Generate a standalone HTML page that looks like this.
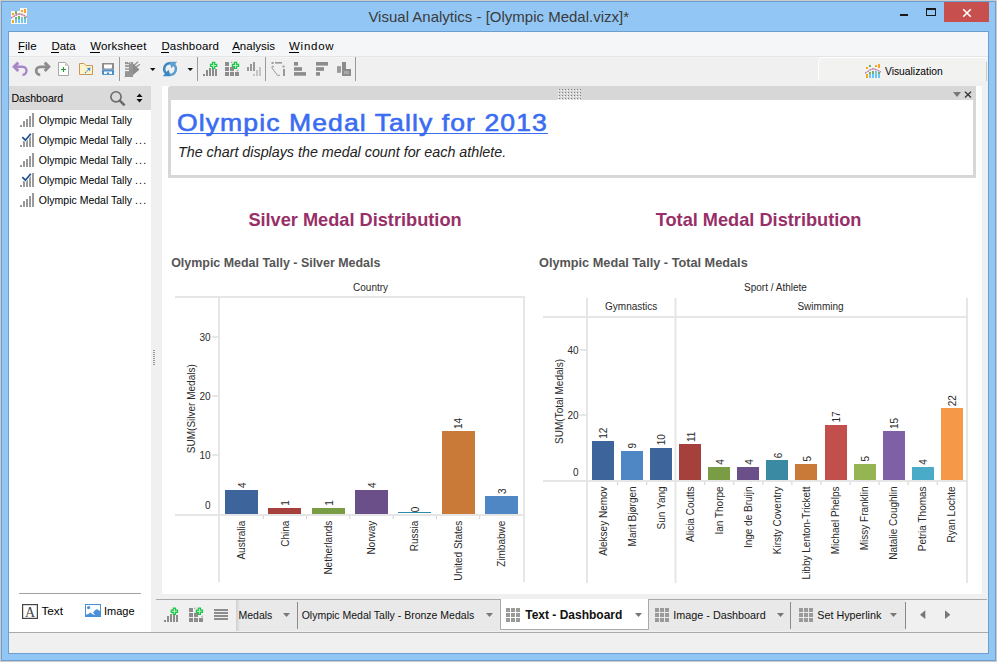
<!DOCTYPE html>
<html><head><meta charset="utf-8"><style>
*{margin:0;padding:0;box-sizing:border-box}
html,body{width:997px;height:662px;overflow:hidden}
body{position:relative;background:#cbcbcb;font-family:"Liberation Sans", sans-serif}
.a{position:absolute}
.t{position:absolute;white-space:nowrap;line-height:1}
svg text{font-family:"Liberation Sans", sans-serif}
</style></head><body>
<div class="a" style="left:1px;top:1px;width:995px;height:660px;background:#92c7f5;border:1px solid #6c9fd0"></div>
<div class="a" style="left:8px;top:31px;width:981px;height:623px;background:#f0f0f0;border:1px solid #6c9fd0"></div>
<svg class="a" style="left:11px;top:8px" width="16" height="16" viewBox="0 0 16 16">
<rect x="0" y="3" width="16" height="13" fill="#fdf6ee"/><rect x="9" y="0" width="7" height="5" fill="#fdf6ee"/>
<rect x="1" y="5" width="2" height="2" fill="#f5a623"/><rect x="4" y="3" width="2" height="3" fill="#6fb06f"/>
<rect x="10" y="2" width="2" height="2" fill="#f5a623"/><rect x="13" y="1" width="2" height="4" fill="#f5a623"/>
<rect x="1" y="12" width="2" height="3" fill="#f5a623"/><rect x="4" y="11" width="2" height="4" fill="#6ec6f5"/><rect x="4" y="9" width="2" height="2" fill="#6fb06f"/>
<rect x="7" y="11" width="2" height="4" fill="#6ec6f5"/><rect x="7" y="8" width="2" height="3" fill="#6fb06f"/>
<rect x="10" y="9" width="2" height="6" fill="#6ec6f5"/><rect x="13" y="11" width="2" height="4" fill="#6ec6f5"/><rect x="13" y="9" width="2" height="2" fill="#6fb06f"/>
<path d="M0 10L5 7L8 5.8L11 6.5L16 9" fill="none" stroke="#f4a8a0" stroke-width="1.4"/>
<path d="M0 10L5 7L8 5.8L11 6.5L16 9" fill="none" stroke="#9a86d8" stroke-width="1.4" stroke-dasharray="1.4 1.4"/>
</svg>
<div class="t" style="left:368.40px;top:8.60px;font-size:15px;color:#3b3b3b;font-weight:normal;font-style:normal;">Visual Analytics - [Olympic Medal.vizx]*</div>
<div class="a" style="left:900px;top:14px;width:8px;height:2px;background:#1a1a1a"></div>
<div class="a" style="left:926px;top:8px;width:10px;height:8px;border:1px solid #1a1a1a;border-top-width:2px"></div>
<div class="a" style="left:944px;top:2px;width:45px;height:20px;background:#c7504f"></div>
<svg class="a" style="left:962px;top:8px" width="10" height="10" viewBox="0 0 10 10"><path d="M1.2 1.2L8.8 8.8M8.8 1.2L1.2 8.8" stroke="#fff" stroke-width="1.6"/></svg>
<div class="a" style="left:9px;top:32px;width:979px;height:24px;background:#f5f6f7"></div>
<div class="a" style="left:9px;top:56px;width:979px;height:1px;background:#e4e5e7"></div>
<div class="a" style="left:9px;top:57px;width:979px;height:1px;background:#f4f4f4"></div>
<div class="t" style="left:18.00px;top:41.07px;font-size:11.5px;color:#000;font-weight:normal;font-style:normal;letter-spacing:0px">File</div>
<div class="a" style="left:18px;top:52px;width:6px;height:1px;background:#000"></div>
<div class="t" style="left:51.40px;top:41.07px;font-size:11.5px;color:#000;font-weight:normal;font-style:normal;letter-spacing:0px">Data</div>
<div class="a" style="left:51.4px;top:52px;width:8px;height:1px;background:#000"></div>
<div class="t" style="left:90.20px;top:41.07px;font-size:11.5px;color:#000;font-weight:normal;font-style:normal;letter-spacing:0.18px">Worksheet</div>
<div class="a" style="left:90.2px;top:52px;width:10px;height:1px;background:#000"></div>
<div class="t" style="left:161.40px;top:41.07px;font-size:11.5px;color:#000;font-weight:normal;font-style:normal;letter-spacing:0.15px">Dashboard</div>
<div class="a" style="left:161.4px;top:52px;width:8px;height:1px;background:#000"></div>
<div class="t" style="left:232.20px;top:41.07px;font-size:11.5px;color:#000;font-weight:normal;font-style:normal;letter-spacing:0px">Analysis</div>
<div class="a" style="left:232.2px;top:52px;width:8px;height:1px;background:#000"></div>
<div class="t" style="left:289.00px;top:41.07px;font-size:11.5px;color:#000;font-weight:normal;font-style:normal;letter-spacing:0.75px">Window</div>
<div class="a" style="left:289px;top:52px;width:10px;height:1px;background:#000"></div>
<svg class="a" style="left:9px;top:57px" width="360" height="29" viewBox="9 57 360 29"><path d="M18.3 62.6L14.2 66.8L18.3 71" fill="none" stroke="#a986c9" stroke-width="3"/><path d="M15 66.8H22.5A4 4 0 0 1 22.5 74.8" fill="none" stroke="#a986c9" stroke-width="2.4"/><path d="M44.7 62.6L48.8 66.8L44.7 71" fill="none" stroke="#8c8c8c" stroke-width="3"/><path d="M48 66.8H40.2A4 4 0 0 0 40.2 74.8" fill="none" stroke="#8c8c8c" stroke-width="2.8"/><path d="M58.5 62.5H65.2L68.5 65.8V75.5H58.5Z" fill="#fff" stroke="#a8a8a8"/><path d="M65 62.8V66H68.2Z" fill="#c8c8c8"/><path d="M61 69.5H66M63.5 67V72" stroke="#2a9a3a" stroke-width="1.2"/><path d="M79.5 74.5V63.5H84L86 65.5H92.5V74.5Z" fill="#fdf4cc" stroke="#c8955a"/><path d="M85 73L89 69" fill="none" stroke="#3a8fd0" stroke-width="1.1" stroke-dasharray="1.5 0.8"/><path d="M90.5 67.5L86.8 68.2L89.8 71.2Z" fill="#3a8fd0"/><rect x="102" y="63" width="12" height="6.5" fill="#8c8c8c"/><path d="M104 64.5H112V67.5Q112 68.5 111 68.5H105Q104 68.5 104 67.5Z" fill="#fff"/><path d="M102 69.5H114V75H103L102 74Z" fill="#4a8fc8"/><rect x="104" y="71.5" width="8" height="2.6" fill="#fff"/><rect x="106.8" y="72.4" width="2.4" height="1.7" fill="#4a8fc8"/><rect x="119" y="57" width="1" height="24" fill="#9a9a9a"/><rect x="125" y="62" width="8" height="15" fill="#969696"/><path d="M133 63.5L139.5 69.5L133 75Z" fill="#8a8a8a"/><path d="M124.5 77L133 69" stroke="#8f8f8f" stroke-width="1"/><path d="M134.2 65.2L138 61.8M135.6 67.4L140 64.2" stroke="#969696" stroke-width="1.4"/><rect x="125" y="64.2" width="4" height="1" fill="#f0f0f0"/><rect x="125" y="67" width="4" height="1.3" fill="#f0f0f0"/><rect x="125" y="69.8" width="4" height="1.3" fill="#f0f0f0"/><rect x="128" y="62" width="1" height="1" fill="#f0f0f0"/><rect x="130" y="62.5" width="1" height="1" fill="#f0f0f0"/><path d="M150 68H155.5L152.75 71Z" fill="#111"/><path d="M170 63.2A5.8 5.8 0 0 0 166.6 73.7" fill="none" stroke="#3d86c3" stroke-width="2.5"/><path d="M162.8 76.2H170.8L168.5 69.8Z" fill="#3d86c3"/><path d="M170 74.8A5.8 5.8 0 0 0 173.4 64.3" fill="none" stroke="#5a9fd0" stroke-width="2.5"/><path d="M177.2 61.8H169.2L171.5 68.2Z" fill="#5a9fd0"/><path d="M187.5 68H193L190.25 71Z" fill="#111"/><rect x="197" y="57" width="1" height="24" fill="#9a9a9a"/><rect x="203" y="74" width="2" height="2" fill="#8c8c8c"/><rect x="206" y="70" width="2" height="6" fill="#8c8c8c"/><rect x="209" y="68" width="2" height="8" fill="#8c8c8c"/><rect x="212" y="69" width="2" height="7" fill="#8c8c8c"/><rect x="215" y="69" width="2" height="7" fill="#8c8c8c"/><path d="M212.5 62.300000000000004H214.7V64.30000000000001H216.7V66.5H214.7V68.5H212.5V66.5H210.5V64.30000000000001H212.5Z" fill="#b8f0c4" stroke="#1cc448" stroke-width="1.2"/><rect x="225" y="62" width="4" height="4" fill="#8c8c8c"/><rect x="225" y="67" width="4" height="4" fill="#8c8c8c"/><rect x="225" y="72" width="4" height="4" fill="#8c8c8c"/><rect x="230" y="67" width="4" height="4" fill="#8c8c8c"/><rect x="230" y="72" width="4" height="4" fill="#8c8c8c"/><rect x="235" y="72" width="4" height="4" fill="#8c8c8c"/><path d="M231.5 63V62H232.5M238 69.5V71H236.5M231.5 69.5V71H232.5" fill="none" stroke="#999" stroke-width="0.8"/><path d="M234.4 62.300000000000004H236.6V64.30000000000001H238.6V66.5H236.6V68.5H234.4V66.5H232.4V64.30000000000001H234.4Z" fill="#b8f0c4" stroke="#1cc448" stroke-width="1.2"/><rect x="247" y="67" width="2" height="4" fill="#999"/><rect x="250" y="64" width="2" height="7" fill="#999"/><rect x="253" y="62" width="2" height="9" fill="#999"/><rect x="253" y="74" width="2" height="2" fill="#c4c4c4"/><rect x="256" y="70" width="2" height="6" fill="#c4c4c4"/><rect x="259" y="67" width="2" height="9" fill="#c4c4c4"/><rect x="265" y="57" width="1" height="24" fill="#9a9a9a"/><rect x="275" y="62" width="7" height="1.6" fill="#999"/><rect x="271.5" y="62" width="2" height="2" fill="#999"/><rect x="282.5" y="65.5" width="2" height="2" fill="#999"/><rect x="283" y="69" width="2" height="7" fill="#999"/><path d="M272 66.5V68L277.5 75.3H280" fill="none" stroke="#999" stroke-width="1"/><path d="M272 66L274 67" stroke="#999" stroke-width="1"/><rect x="294" y="62" width="4" height="3.6" fill="#8c8c8c"/><rect x="294" y="67.2" width="8" height="3.6" fill="#8c8c8c"/><rect x="294" y="72.1" width="12" height="3.6" fill="#8c8c8c"/><rect x="316" y="62" width="12" height="3.6" fill="#8c8c8c"/><rect x="316" y="67.2" width="8" height="3.6" fill="#8c8c8c"/><rect x="316" y="72.1" width="4" height="3.6" fill="#8c8c8c"/><rect x="337" y="66.2" width="4" height="6.6" fill="#9a9a9a"/><rect x="342" y="62" width="4" height="14" fill="#8c8c8c"/><rect x="342" y="69" width="9" height="7" fill="#8c8c8c"/><rect x="344" y="71" width="5" height="3" fill="#a8a8a8"/><rect x="355" y="57" width="1" height="24" fill="#9a9a9a"/></svg>
<div class="a" style="left:818px;top:57px;width:169px;height:24px;background:#f2f2f1;border-top:1px solid #fff;border-left:1px solid #fff;border-top-left-radius:5px"></div>
<div class="a" style="left:986px;top:62px;width:1px;height:19px;background:#c8c8c8"></div>
<svg class="a" style="left:865px;top:64px" width="16" height="14" viewBox="0 0 16 14">
<rect x="1" y="3" width="2" height="2" fill="#f5a623"/><rect x="4" y="1" width="2" height="2" fill="#6fb06f"/>
<rect x="10" y="1" width="2" height="2" fill="#f5a623"/><rect x="13" y="0" width="2" height="4" fill="#f5a623"/>
<rect x="1" y="10" width="2" height="4" fill="#f5a623"/><rect x="4" y="10" width="2" height="4" fill="#6ec6f5"/><rect x="4" y="8" width="2" height="2" fill="#6fb06f"/>
<rect x="7" y="10" width="2" height="4" fill="#6ec6f5"/><rect x="7" y="7" width="2" height="3" fill="#6fb06f"/>
<rect x="10" y="7" width="2" height="7" fill="#6ec6f5"/><rect x="13" y="10" width="2" height="4" fill="#6ec6f5"/><rect x="13" y="8" width="2" height="2" fill="#6fb06f"/>
<path d="M0 9.2L5 6L8 4.8L11 5.5L16 8" fill="none" stroke="#f4a8a0" stroke-width="1.3"/>
<path d="M0 9.2L5 6L8 4.8L11 5.5L16 8" fill="none" stroke="#9a86d8" stroke-width="1.3" stroke-dasharray="1.4 1.4"/>
</svg>
<div class="t" style="left:885.00px;top:66.78px;font-size:10.3px;color:#000;font-weight:normal;font-style:normal;">Visualization</div>
<div class="a" style="left:9px;top:86px;width:142px;height:24px;background:#dadada"></div>
<div class="t" style="left:11.40px;top:92.53px;font-size:10.6px;color:#000;font-weight:normal;font-style:normal;">Dashboard</div>
<svg class="a" style="left:109px;top:90px" width="18" height="18" viewBox="0 0 18 18">
<circle cx="7" cy="6.8" r="5.1" fill="none" stroke="#6a6a6a" stroke-width="1.6"/><path d="M10.6 10.4L15.6 15.4" stroke="#6a6a6a" stroke-width="2.6"/></svg>
<svg class="a" style="left:136px;top:93px" width="7" height="10" viewBox="0 0 7 10">
<path d="M3.5 0.5L6.5 4H0.5Z M3.5 9.5L6.5 6H0.5Z" fill="#111"/></svg>
<div class="a" style="left:9px;top:110px;width:142px;height:522px;background:#fff"></div>
<svg class="a" style="left:20px;top:113px" width="15" height="14" viewBox="0 0 15 14"><rect x="0" y="12" width="2" height="2" fill="#9a9a9a"/><rect x="3" y="8" width="2" height="6" fill="#9a9a9a"/><rect x="6" y="6" width="2" height="8" fill="#9a9a9a"/><rect x="9" y="3" width="2" height="11" fill="#9a9a9a"/><rect x="12" y="0" width="2" height="14" fill="#9a9a9a"/></svg>
<div class="t" style="left:38.80px;top:114.71px;font-size:10.5px;color:#000;font-weight:normal;font-style:normal;">Olympic Medal Tally</div>
<svg class="a" style="left:20px;top:133px" width="15" height="14" viewBox="0 0 15 14"><rect x="0" y="12" width="2" height="2" fill="#9a9a9a"/><rect x="3" y="8" width="2" height="6" fill="#9a9a9a"/><rect x="6" y="6" width="2" height="8" fill="#9a9a9a"/><rect x="9" y="3" width="2" height="11" fill="#9a9a9a"/><rect x="12" y="0" width="2" height="14" fill="#9a9a9a"/><path d="M2.3 4.2L5.4 7.2L10.8 0.8" fill="none" stroke="#fff" stroke-width="3.2"/><path d="M2.3 4.2L5.4 7.2L10.8 0.8" fill="none" stroke="#1f4f8f" stroke-width="1.7"/></svg>
<div class="t" style="left:38.80px;top:134.71px;font-size:10.5px;color:#000;font-weight:normal;font-style:normal;">Olympic Medal Tally <span style="letter-spacing:1.2px">...</span></div>
<svg class="a" style="left:20px;top:153px" width="15" height="14" viewBox="0 0 15 14"><rect x="0" y="12" width="2" height="2" fill="#9a9a9a"/><rect x="3" y="8" width="2" height="6" fill="#9a9a9a"/><rect x="6" y="6" width="2" height="8" fill="#9a9a9a"/><rect x="9" y="3" width="2" height="11" fill="#9a9a9a"/><rect x="12" y="0" width="2" height="14" fill="#9a9a9a"/></svg>
<div class="t" style="left:38.80px;top:154.71px;font-size:10.5px;color:#000;font-weight:normal;font-style:normal;">Olympic Medal Tally <span style="letter-spacing:1.2px">...</span></div>
<svg class="a" style="left:20px;top:173px" width="15" height="14" viewBox="0 0 15 14"><rect x="0" y="12" width="2" height="2" fill="#9a9a9a"/><rect x="3" y="8" width="2" height="6" fill="#9a9a9a"/><rect x="6" y="6" width="2" height="8" fill="#9a9a9a"/><rect x="9" y="3" width="2" height="11" fill="#9a9a9a"/><rect x="12" y="0" width="2" height="14" fill="#9a9a9a"/><path d="M2.3 4.2L5.4 7.2L10.8 0.8" fill="none" stroke="#fff" stroke-width="3.2"/><path d="M2.3 4.2L5.4 7.2L10.8 0.8" fill="none" stroke="#1f4f8f" stroke-width="1.7"/></svg>
<div class="t" style="left:38.80px;top:174.71px;font-size:10.5px;color:#000;font-weight:normal;font-style:normal;">Olympic Medal Tally <span style="letter-spacing:1.2px">...</span></div>
<svg class="a" style="left:20px;top:193px" width="15" height="14" viewBox="0 0 15 14"><rect x="0" y="12" width="2" height="2" fill="#9a9a9a"/><rect x="3" y="8" width="2" height="6" fill="#9a9a9a"/><rect x="6" y="6" width="2" height="8" fill="#9a9a9a"/><rect x="9" y="3" width="2" height="11" fill="#9a9a9a"/><rect x="12" y="0" width="2" height="14" fill="#9a9a9a"/></svg>
<div class="t" style="left:38.80px;top:194.71px;font-size:10.5px;color:#000;font-weight:normal;font-style:normal;">Olympic Medal Tally <span style="letter-spacing:1.2px">...</span></div>
<div class="a" style="left:19px;top:593px;width:122px;height:1px;background:#a0a0a0"></div>
<svg class="a" style="left:22px;top:604px" width="16" height="15" viewBox="0 0 16 15">
<rect x="0.6" y="0.6" width="14.8" height="13.8" fill="#fff" stroke="#444" stroke-width="1.2"/>
<text x="8" y="12.6" font-size="14" text-anchor="middle" fill="#444" style="font-family:'Liberation Serif',serif">A</text></svg>
<div class="t" style="left:41.40px;top:605.61px;font-size:11.8px;color:#000;font-weight:normal;font-style:normal;">Text</div>
<svg class="a" style="left:85px;top:604px" width="16" height="13" viewBox="0 0 16 13">
<rect x="0" y="0" width="16" height="13" fill="#4a90d9"/><rect x="1" y="1" width="14" height="11" fill="#fff"/>
<circle cx="3.6" cy="3.6" r="1.6" fill="#4a90d9"/><path d="M1 12V11.2L3 10.2L5.3 8.4L7.5 10.2L9.5 12Z" fill="#4a90d9"/><rect x="1" y="10.5" width="14" height="2" fill="#4a90d9"/><path d="M8 8.5L10.5 5.8L12.5 5.3L15 7.2V12H9.5Z" fill="#4a90d9"/><path d="M7.3 8.2L9.6 11" stroke="#fff" stroke-width="0.9"/></svg>
<div class="t" style="left:104.00px;top:606.29px;font-size:11px;color:#000;font-weight:normal;font-style:normal;">Image</div>
<div class="a" style="left:162px;top:86px;width:820px;height:508px;background:#fff"></div>
<div class="a" style="left:153px;top:350px;width:2px;height:1px;background:#9a9a9a"></div>
<div class="a" style="left:153px;top:352px;width:2px;height:1px;background:#9a9a9a"></div>
<div class="a" style="left:153px;top:354px;width:2px;height:1px;background:#9a9a9a"></div>
<div class="a" style="left:153px;top:356px;width:2px;height:1px;background:#9a9a9a"></div>
<div class="a" style="left:153px;top:358px;width:2px;height:1px;background:#9a9a9a"></div>
<div class="a" style="left:153px;top:360px;width:2px;height:1px;background:#9a9a9a"></div>
<div class="a" style="left:153px;top:362px;width:2px;height:1px;background:#9a9a9a"></div>
<div class="a" style="left:153px;top:364px;width:2px;height:1px;background:#9a9a9a"></div>
<div class="a" style="left:168px;top:86px;width:808px;height:92px;background:#d7d7d7;border-top-left-radius:3px"></div>
<div class="a" style="left:171px;top:100px;width:802px;height:75px;background:#fff"></div>
<svg class="a" style="left:557px;top:88px" width="26" height="13" viewBox="0 0 26 13"><rect x="1" y="2" width="1" height="1" fill="#fcfcfc"/><rect x="1" y="5" width="1" height="1" fill="#fcfcfc"/><rect x="1" y="8" width="1" height="1" fill="#fcfcfc"/><rect x="1" y="11" width="1" height="1" fill="#fcfcfc"/><rect x="4" y="2" width="1" height="1" fill="#fcfcfc"/><rect x="4" y="5" width="1" height="1" fill="#fcfcfc"/><rect x="4" y="8" width="1" height="1" fill="#fcfcfc"/><rect x="4" y="11" width="1" height="1" fill="#fcfcfc"/><rect x="7" y="2" width="1" height="1" fill="#fcfcfc"/><rect x="7" y="5" width="1" height="1" fill="#fcfcfc"/><rect x="7" y="8" width="1" height="1" fill="#fcfcfc"/><rect x="7" y="11" width="1" height="1" fill="#fcfcfc"/><rect x="10" y="2" width="1" height="1" fill="#fcfcfc"/><rect x="10" y="5" width="1" height="1" fill="#fcfcfc"/><rect x="10" y="8" width="1" height="1" fill="#fcfcfc"/><rect x="10" y="11" width="1" height="1" fill="#fcfcfc"/><rect x="13" y="2" width="1" height="1" fill="#fcfcfc"/><rect x="13" y="5" width="1" height="1" fill="#fcfcfc"/><rect x="13" y="8" width="1" height="1" fill="#fcfcfc"/><rect x="13" y="11" width="1" height="1" fill="#fcfcfc"/><rect x="16" y="2" width="1" height="1" fill="#fcfcfc"/><rect x="16" y="5" width="1" height="1" fill="#fcfcfc"/><rect x="16" y="8" width="1" height="1" fill="#fcfcfc"/><rect x="16" y="11" width="1" height="1" fill="#fcfcfc"/><rect x="19" y="2" width="1" height="1" fill="#fcfcfc"/><rect x="19" y="5" width="1" height="1" fill="#fcfcfc"/><rect x="19" y="8" width="1" height="1" fill="#fcfcfc"/><rect x="19" y="11" width="1" height="1" fill="#fcfcfc"/><rect x="22" y="2" width="1" height="1" fill="#fcfcfc"/><rect x="22" y="5" width="1" height="1" fill="#fcfcfc"/><rect x="22" y="8" width="1" height="1" fill="#fcfcfc"/><rect x="22" y="11" width="1" height="1" fill="#fcfcfc"/><rect x="2" y="1" width="1" height="1" fill="#808080"/><rect x="2" y="4" width="1" height="1" fill="#808080"/><rect x="2" y="7" width="1" height="1" fill="#808080"/><rect x="2" y="10" width="1" height="1" fill="#808080"/><rect x="5" y="1" width="1" height="1" fill="#808080"/><rect x="5" y="4" width="1" height="1" fill="#808080"/><rect x="5" y="7" width="1" height="1" fill="#808080"/><rect x="5" y="10" width="1" height="1" fill="#808080"/><rect x="8" y="1" width="1" height="1" fill="#808080"/><rect x="8" y="4" width="1" height="1" fill="#808080"/><rect x="8" y="7" width="1" height="1" fill="#808080"/><rect x="8" y="10" width="1" height="1" fill="#808080"/><rect x="11" y="1" width="1" height="1" fill="#808080"/><rect x="11" y="4" width="1" height="1" fill="#808080"/><rect x="11" y="7" width="1" height="1" fill="#808080"/><rect x="11" y="10" width="1" height="1" fill="#808080"/><rect x="14" y="1" width="1" height="1" fill="#808080"/><rect x="14" y="4" width="1" height="1" fill="#808080"/><rect x="14" y="7" width="1" height="1" fill="#808080"/><rect x="14" y="10" width="1" height="1" fill="#808080"/><rect x="17" y="1" width="1" height="1" fill="#808080"/><rect x="17" y="4" width="1" height="1" fill="#808080"/><rect x="17" y="7" width="1" height="1" fill="#808080"/><rect x="17" y="10" width="1" height="1" fill="#808080"/><rect x="20" y="1" width="1" height="1" fill="#808080"/><rect x="20" y="4" width="1" height="1" fill="#808080"/><rect x="20" y="7" width="1" height="1" fill="#808080"/><rect x="20" y="10" width="1" height="1" fill="#808080"/><rect x="23" y="1" width="1" height="1" fill="#808080"/><rect x="23" y="4" width="1" height="1" fill="#808080"/><rect x="23" y="7" width="1" height="1" fill="#808080"/><rect x="23" y="10" width="1" height="1" fill="#808080"/></svg>
<svg class="a" style="left:953px;top:92px" width="8" height="5" viewBox="0 0 8 5"><path d="M0 0H8L4 5Z" fill="#777"/></svg>
<svg class="a" style="left:964px;top:91px" width="8" height="7" viewBox="0 0 8 7"><path d="M1 0.8L7 6.4M7 0.8L1 6.4" stroke="#333" stroke-width="1.3"/></svg>
<div class="t" style="left:176.60px;top:111.28px;font-size:24px;color:#3a6cf2;font-weight:normal;font-style:normal;text-decoration:underline;text-decoration-thickness:1px;text-underline-offset:1.5px;text-decoration-skip-ink:none;letter-spacing:1px;transform:scaleX(1.105);transform-origin:0 0;-webkit-text-stroke:0.6px #3a6cf2">Olympic Medal Tally for 2013</div>
<div class="t" style="left:178.00px;top:144.90px;font-size:14.3px;color:#222;font-weight:normal;font-style:italic;">The chart displays the medal count for each athlete.</div>
<svg class="a" style="left:0;top:0" width="997" height="662" viewBox="0 0 997 662"><text x="355.00" y="226.00" font-size="18.2" fill="#982f68" text-anchor="middle" font-weight="bold" >Silver Medal Distribution</text><text x="758.60" y="226.00" font-size="18.2" fill="#982f68" text-anchor="middle" font-weight="bold" >Total Medal Distribution</text><text x="171.20" y="267.00" font-size="12.45" fill="#555" text-anchor="start" font-weight="bold" >Olympic Medal Tally - Silver Medals</text><text x="539.00" y="267.00" font-size="12.72" fill="#555" text-anchor="start" font-weight="bold" >Olympic Medal Tally - Total Medals</text><text x="370.60" y="291.00" font-size="10" fill="#2a2a2a" text-anchor="middle" font-weight="normal" >Country</text><rect x="175.00" y="296.00" width="350.00" height="2.00" fill="#e6e6e6"/><rect x="218.00" y="298.00" width="2.00" height="284.00" fill="#e6e6e6"/><rect x="523.00" y="298.00" width="2.00" height="284.00" fill="#e6e6e6"/><rect x="175.00" y="514.00" width="350.00" height="2.00" fill="#e6e6e6"/><rect x="212.00" y="454.50" width="6.00" height="1.00" fill="#d0d0d0"/><text x="210.50" y="458.80" font-size="10" fill="#2a2a2a" text-anchor="end" font-weight="normal" >10</text><rect x="212.00" y="395.50" width="6.00" height="1.00" fill="#d0d0d0"/><text x="210.50" y="399.80" font-size="10" fill="#2a2a2a" text-anchor="end" font-weight="normal" >20</text><rect x="212.00" y="336.50" width="6.00" height="1.00" fill="#d0d0d0"/><text x="210.50" y="340.80" font-size="10" fill="#2a2a2a" text-anchor="end" font-weight="normal" >30</text><text x="210.50" y="509.00" font-size="10" fill="#2a2a2a" text-anchor="end" font-weight="normal" >0</text><text transform="translate(194.50,408.70) rotate(-90)" font-size="10" fill="#2a2a2a" text-anchor="middle">SUM(Silver Medals)</text><rect x="225.00" y="490.00" width="33.00" height="24.00" fill="#3e659b"/><text transform="translate(245.94,488.10) rotate(-90)" font-size="10" fill="#2a2a2a" text-anchor="start">4</text><text transform="translate(245.24,520.70) rotate(-90)" font-size="10" fill="#2a2a2a" text-anchor="end">Australia</text><rect x="268.00" y="508.00" width="33.00" height="6.00" fill="#a6403d"/><text transform="translate(289.23,505.80) rotate(-90)" font-size="10" fill="#2a2a2a" text-anchor="start">1</text><text transform="translate(288.53,520.70) rotate(-90)" font-size="10" fill="#2a2a2a" text-anchor="end">China</text><rect x="262.79" y="516.00" width="1.00" height="3.00" fill="#cfcfcf"/><rect x="312.00" y="508.00" width="33.00" height="6.00" fill="#7a9c44"/><text transform="translate(332.51,505.80) rotate(-90)" font-size="10" fill="#2a2a2a" text-anchor="start">1</text><text transform="translate(331.81,520.70) rotate(-90)" font-size="10" fill="#2a2a2a" text-anchor="end">Netherlands</text><rect x="306.07" y="516.00" width="1.00" height="3.00" fill="#cfcfcf"/><rect x="355.00" y="490.00" width="33.00" height="24.00" fill="#6b4f89"/><text transform="translate(375.80,488.10) rotate(-90)" font-size="10" fill="#2a2a2a" text-anchor="start">4</text><text transform="translate(375.10,520.70) rotate(-90)" font-size="10" fill="#2a2a2a" text-anchor="end">Norway</text><rect x="349.36" y="516.00" width="1.00" height="3.00" fill="#cfcfcf"/><rect x="398.00" y="512.00" width="33.00" height="1.00" fill="#2b8aa8"/><text transform="translate(419.09,512.20) rotate(-90)" font-size="10" fill="#2a2a2a" text-anchor="start">0</text><text transform="translate(418.39,520.70) rotate(-90)" font-size="10" fill="#2a2a2a" text-anchor="end">Russia</text><rect x="392.64" y="516.00" width="1.00" height="3.00" fill="#cfcfcf"/><rect x="442.00" y="431.00" width="33.00" height="83.00" fill="#c97a38"/><text transform="translate(462.37,429.10) rotate(-90)" font-size="10" fill="#2a2a2a" text-anchor="start">14</text><text transform="translate(461.67,520.70) rotate(-90)" font-size="10" fill="#2a2a2a" text-anchor="end">United States</text><rect x="435.93" y="516.00" width="1.00" height="3.00" fill="#cfcfcf"/><rect x="485.00" y="496.00" width="33.00" height="18.00" fill="#4f86c4"/><text transform="translate(505.66,494.00) rotate(-90)" font-size="10" fill="#2a2a2a" text-anchor="start">3</text><text transform="translate(504.96,520.70) rotate(-90)" font-size="10" fill="#2a2a2a" text-anchor="end">Zimbabwe</text><rect x="479.21" y="516.00" width="1.00" height="3.00" fill="#cfcfcf"/><text x="775.50" y="291.00" font-size="10" fill="#2a2a2a" text-anchor="middle" font-weight="normal" >Sport / Athlete</text><text x="631.20" y="310.00" font-size="10" fill="#2a2a2a" text-anchor="middle" font-weight="normal" >Gymnastics</text><text x="820.50" y="310.00" font-size="10" fill="#2a2a2a" text-anchor="middle" font-weight="normal" >Swimming</text><rect x="586.00" y="298.00" width="2.00" height="285.00" fill="#e6e6e6"/><rect x="674.50" y="298.00" width="2.00" height="285.00" fill="#e6e6e6"/><rect x="966.00" y="298.00" width="2.00" height="285.00" fill="#e6e6e6"/><rect x="543.00" y="316.00" width="424.50" height="2.00" fill="#e6e6e6"/><rect x="543.00" y="480.00" width="424.50" height="2.00" fill="#e6e6e6"/><rect x="579.50" y="414.50" width="6.50" height="1.00" fill="#d0d0d0"/><text x="578.50" y="418.80" font-size="10" fill="#2a2a2a" text-anchor="end" font-weight="normal" >20</text><rect x="579.50" y="349.50" width="6.50" height="1.00" fill="#d0d0d0"/><text x="578.50" y="353.80" font-size="10" fill="#2a2a2a" text-anchor="end" font-weight="normal" >40</text><text x="578.50" y="475.50" font-size="10" fill="#2a2a2a" text-anchor="end" font-weight="normal" >0</text><text transform="translate(562.70,401.40) rotate(-90)" font-size="10" fill="#2a2a2a" text-anchor="middle">SUM(Total Medals)</text><rect x="592.00" y="441.00" width="22.00" height="39.00" fill="#3e659b"/><text transform="translate(607.33,438.70) rotate(-90)" font-size="10" fill="#2a2a2a" text-anchor="start">12</text><text transform="translate(606.63,486.40) rotate(-90)" font-size="10" fill="#2a2a2a" text-anchor="end">Aleksey Nemov</text><rect x="621.00" y="451.00" width="22.00" height="29.00" fill="#4f86c4"/><text transform="translate(636.39,448.45) rotate(-90)" font-size="10" fill="#2a2a2a" text-anchor="start">9</text><text transform="translate(635.69,486.40) rotate(-90)" font-size="10" fill="#2a2a2a" text-anchor="end">Marit Bjørgen</text><rect x="617.06" y="482.00" width="1.00" height="3.00" fill="#cfcfcf"/><rect x="650.00" y="448.00" width="22.00" height="32.00" fill="#3e659b"/><text transform="translate(665.45,445.20) rotate(-90)" font-size="10" fill="#2a2a2a" text-anchor="start">10</text><text transform="translate(664.75,486.40) rotate(-90)" font-size="10" fill="#2a2a2a" text-anchor="end">Sun Yang</text><rect x="646.12" y="482.00" width="1.00" height="3.00" fill="#cfcfcf"/><rect x="679.00" y="444.00" width="22.00" height="36.00" fill="#a6403d"/><text transform="translate(694.51,441.95) rotate(-90)" font-size="10" fill="#2a2a2a" text-anchor="start">11</text><text transform="translate(693.81,486.40) rotate(-90)" font-size="10" fill="#2a2a2a" text-anchor="end">Alicia Coutts</text><rect x="708.00" y="467.00" width="22.00" height="13.00" fill="#7a9c44"/><text transform="translate(723.57,464.70) rotate(-90)" font-size="10" fill="#2a2a2a" text-anchor="start">4</text><text transform="translate(722.87,486.40) rotate(-90)" font-size="10" fill="#2a2a2a" text-anchor="end">Ian Thorpe</text><rect x="704.24" y="482.00" width="1.00" height="3.00" fill="#cfcfcf"/><rect x="737.00" y="467.00" width="22.00" height="13.00" fill="#6b4f89"/><text transform="translate(752.63,464.70) rotate(-90)" font-size="10" fill="#2a2a2a" text-anchor="start">4</text><text transform="translate(751.93,486.40) rotate(-90)" font-size="10" fill="#2a2a2a" text-anchor="end">Inge de Bruijn</text><rect x="733.30" y="482.00" width="1.00" height="3.00" fill="#cfcfcf"/><rect x="766.00" y="460.00" width="22.00" height="20.00" fill="#3a8aa3"/><text transform="translate(781.69,458.20) rotate(-90)" font-size="10" fill="#2a2a2a" text-anchor="start">6</text><text transform="translate(780.99,486.40) rotate(-90)" font-size="10" fill="#2a2a2a" text-anchor="end">Kirsty Coventry</text><rect x="762.36" y="482.00" width="1.00" height="3.00" fill="#cfcfcf"/><rect x="795.00" y="464.00" width="22.00" height="16.00" fill="#c97a38"/><text transform="translate(810.75,461.45) rotate(-90)" font-size="10" fill="#2a2a2a" text-anchor="start">5</text><text transform="translate(810.05,486.40) rotate(-90)" font-size="10" fill="#2a2a2a" text-anchor="end">Libby Lenton-Trickett</text><rect x="791.42" y="482.00" width="1.00" height="3.00" fill="#cfcfcf"/><rect x="825.00" y="425.00" width="22.00" height="55.00" fill="#c24f4b"/><text transform="translate(839.81,422.45) rotate(-90)" font-size="10" fill="#2a2a2a" text-anchor="start">17</text><text transform="translate(839.11,486.40) rotate(-90)" font-size="10" fill="#2a2a2a" text-anchor="end">Michael Phelps</text><rect x="820.48" y="482.00" width="1.00" height="3.00" fill="#cfcfcf"/><rect x="854.00" y="464.00" width="22.00" height="16.00" fill="#95b553"/><text transform="translate(868.87,461.45) rotate(-90)" font-size="10" fill="#2a2a2a" text-anchor="start">5</text><text transform="translate(868.17,486.40) rotate(-90)" font-size="10" fill="#2a2a2a" text-anchor="end">Missy Franklin</text><rect x="849.54" y="482.00" width="1.00" height="3.00" fill="#cfcfcf"/><rect x="883.00" y="431.00" width="22.00" height="49.00" fill="#7f60a6"/><text transform="translate(897.93,428.95) rotate(-90)" font-size="10" fill="#2a2a2a" text-anchor="start">15</text><text transform="translate(897.23,486.40) rotate(-90)" font-size="10" fill="#2a2a2a" text-anchor="end">Natalie Coughlin</text><rect x="878.60" y="482.00" width="1.00" height="3.00" fill="#cfcfcf"/><rect x="912.00" y="467.00" width="22.00" height="13.00" fill="#4aabc9"/><text transform="translate(926.99,464.70) rotate(-90)" font-size="10" fill="#2a2a2a" text-anchor="start">4</text><text transform="translate(926.29,486.40) rotate(-90)" font-size="10" fill="#2a2a2a" text-anchor="end">Petria Thomas</text><rect x="907.66" y="482.00" width="1.00" height="3.00" fill="#cfcfcf"/><rect x="941.00" y="408.00" width="22.00" height="72.00" fill="#f59847"/><text transform="translate(956.05,406.20) rotate(-90)" font-size="10" fill="#2a2a2a" text-anchor="start">22</text><text transform="translate(955.35,486.40) rotate(-90)" font-size="10" fill="#2a2a2a" text-anchor="end">Ryan Lochte</text><rect x="936.72" y="482.00" width="1.00" height="3.00" fill="#cfcfcf"/></svg>
<div class="a" style="left:156px;top:599px;width:831px;height:1px;background:#a9a9a9"></div>
<div class="a" style="left:151px;top:600px;width:836px;height:32px;background:#f0f0f0"></div>
<div class="a" style="left:236px;top:600px;width:669px;height:31px;background:#e9e9e9"></div>
<div class="a" style="left:236px;top:600px;width:4px;height:31px;background:linear-gradient(to right,#cfcfcf,#e9e9e9)"></div>
<div class="a" style="left:9px;top:632px;width:979px;height:1px;background:#a9a9a9"></div>
<svg class="a" style="left:0px;top:595px" width="997" height="40" viewBox="0 595 997 40"><rect x="164" y="620" width="2" height="2" fill="#8c8c8c"/><rect x="167" y="616" width="2" height="6" fill="#8c8c8c"/><rect x="170" y="614" width="2" height="8" fill="#8c8c8c"/><rect x="173" y="615" width="2" height="7" fill="#8c8c8c"/><rect x="176" y="615" width="2" height="7" fill="#8c8c8c"/><path d="M173.3 608.1999999999999H175.5V610.1999999999999H177.5V612.4H175.5V614.4H173.3V612.4H171.3V610.1999999999999H173.3Z" fill="#b8f0c4" stroke="#1cc448" stroke-width="1.2"/><rect x="189" y="608" width="4" height="4" fill="#8c8c8c"/><rect x="189" y="613" width="4" height="4" fill="#8c8c8c"/><rect x="189" y="618" width="4" height="4" fill="#8c8c8c"/><rect x="194" y="613" width="4" height="4" fill="#8c8c8c"/><rect x="194" y="618" width="4" height="4" fill="#8c8c8c"/><rect x="199" y="618" width="4" height="4" fill="#8c8c8c"/><path d="M194.5 609V608H195.5M202.5 615.5V617H201M194.5 615.5V617H195.5" fill="none" stroke="#999" stroke-width="0.8"/><path d="M198.3 608.1999999999999H200.5V610.1999999999999H202.5V612.4H200.5V614.4H198.3V612.4H196.3V610.1999999999999H198.3Z" fill="#b8f0c4" stroke="#1cc448" stroke-width="1.2"/><rect x="214" y="609" width="14" height="2" fill="#8c8c8c"/><rect x="214" y="612" width="14" height="2" fill="#8c8c8c"/><rect x="214" y="615" width="14" height="2" fill="#8c8c8c"/><rect x="214" y="618" width="14" height="2" fill="#8c8c8c"/><path d="M283 613H290L286.5 617Z" fill="#777"/><rect x="297" y="602" width="1" height="27" fill="#8a8a8a"/><path d="M486 613H493L489.5 617Z" fill="#777"/><rect x="500" y="599" width="149" height="32" fill="#f0f0f0"/><path d="M500.5 599V629.5H648.5V599" fill="#fff" stroke="#a9a9a9"/><rect x="501" y="599" width="147" height="1" fill="#fff"/><rect x="506" y="608" width="4" height="4" fill="#9a9a9a"/><rect x="506" y="613" width="4" height="4" fill="#9a9a9a"/><rect x="506" y="618" width="4" height="4" fill="#9a9a9a"/><rect x="511" y="608" width="4" height="4" fill="#9a9a9a"/><rect x="511" y="613" width="4" height="4" fill="#9a9a9a"/><rect x="511" y="618" width="4" height="4" fill="#9a9a9a"/><rect x="516" y="608" width="4" height="4" fill="#9a9a9a"/><rect x="516" y="613" width="4" height="4" fill="#9a9a9a"/><rect x="516" y="618" width="4" height="4" fill="#9a9a9a"/><path d="M635 613H642L638.5 617Z" fill="#777"/><rect x="655" y="608" width="4" height="4" fill="#9a9a9a"/><rect x="655" y="613" width="4" height="4" fill="#9a9a9a"/><rect x="655" y="618" width="4" height="4" fill="#9a9a9a"/><rect x="660" y="608" width="4" height="4" fill="#9a9a9a"/><rect x="660" y="613" width="4" height="4" fill="#9a9a9a"/><rect x="660" y="618" width="4" height="4" fill="#9a9a9a"/><rect x="665" y="608" width="4" height="4" fill="#9a9a9a"/><rect x="665" y="613" width="4" height="4" fill="#9a9a9a"/><rect x="665" y="618" width="4" height="4" fill="#9a9a9a"/><path d="M777 613H784L780.5 617Z" fill="#777"/><rect x="790" y="602" width="1" height="27" fill="#8a8a8a"/><rect x="799" y="608" width="4" height="4" fill="#9a9a9a"/><rect x="799" y="613" width="4" height="4" fill="#9a9a9a"/><rect x="799" y="618" width="4" height="4" fill="#9a9a9a"/><rect x="804" y="608" width="4" height="4" fill="#9a9a9a"/><rect x="804" y="613" width="4" height="4" fill="#9a9a9a"/><rect x="804" y="618" width="4" height="4" fill="#9a9a9a"/><rect x="809" y="608" width="4" height="4" fill="#9a9a9a"/><rect x="809" y="613" width="4" height="4" fill="#9a9a9a"/><rect x="809" y="618" width="4" height="4" fill="#9a9a9a"/><path d="M890 613H897L893.5 617Z" fill="#777"/><rect x="905" y="602" width="1" height="27" fill="#8a8a8a"/><path d="M925.3 610.3V619L920 614.65Z" fill="#777"/><path d="M945 610.3V619L950.3 614.65Z" fill="#777"/></svg><div class="t" style="left:238.5px;top:610.11px;font-size:10.5px;font-weight:normal;color:#111">Medals</div><div class="t" style="left:301.7px;top:610.11px;font-size:10.5px;font-weight:normal;color:#111">Olympic Medal Tally - Bronze Medals</div><div class="t" style="left:525.2px;top:608.84px;font-size:12px;font-weight:bold;color:#111">Text - Dashboard</div><div class="t" style="left:673.3px;top:609.86px;font-size:10.8px;font-weight:normal;color:#111">Image - Dashboard</div><div class="t" style="left:817.2px;top:609.86px;font-size:10.8px;font-weight:normal;color:#111">Set Hyperlink</div>
</body></html>
